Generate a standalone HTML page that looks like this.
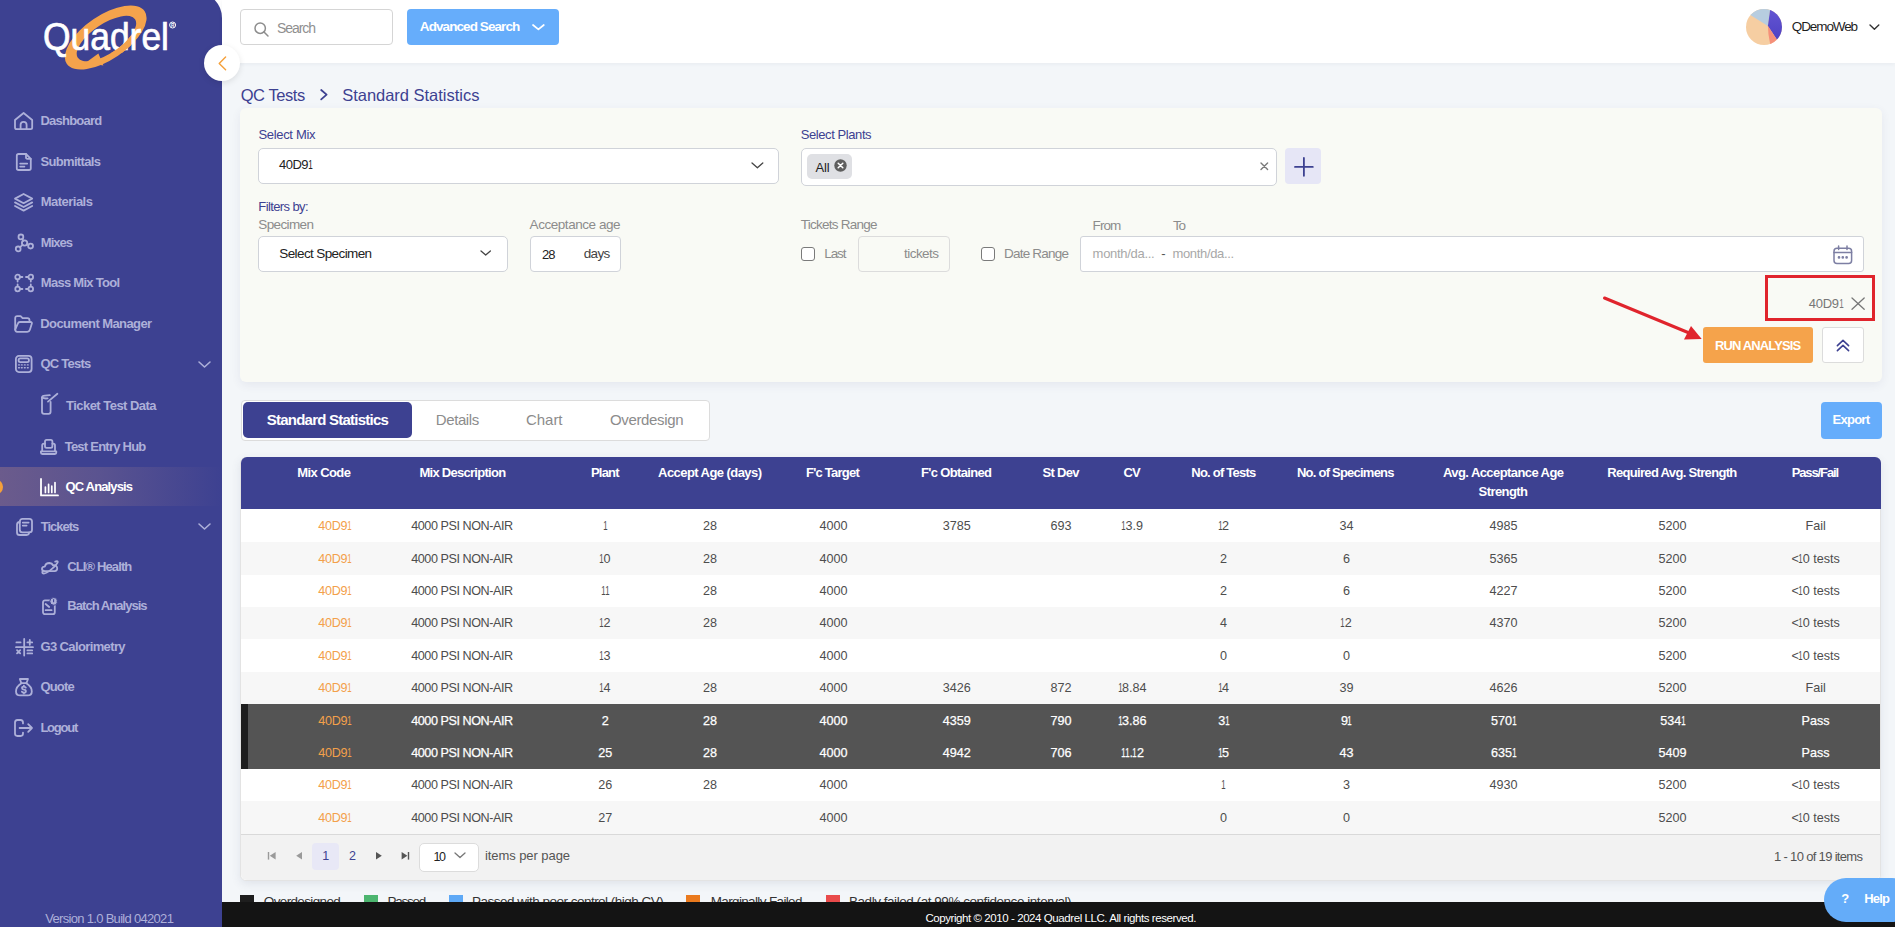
<!DOCTYPE html><html><head><meta charset="utf-8"><style>
html,body{margin:0;padding:0;}
body{width:1895px;height:927px;overflow:hidden;position:relative;background:#f3f6f9;font-family:"Liberation Sans",sans-serif;}
.t{position:absolute;white-space:nowrap;}
svg{overflow:visible;}
</style></head><body>
<div style="position:absolute;left:0;top:0;width:222px;height:40px;background:#fff;"></div>
<div style="position:absolute;left:0;top:-8px;width:222px;height:935px;background:#3d4191;border-top-right-radius:26px;"></div>
<div style="position:absolute;left:0;top:467px;width:222px;height:39px;background:linear-gradient(90deg,#6b5b8c 0%,#5a5390 45%,#3d4191 100%);"></div>
<div style="position:absolute;left:-10px;top:479.5px;width:12.5px;height:14px;border-radius:50%;background:#f5a03a;"></div>
<div class="t" style="left:40.40px;top:112.90px;font-size:13px;line-height:15.6px;color:#adb0d9;letter-spacing:-0.750px;font-weight:700;">Dashboard</div>
<div class="t" style="left:40.40px;top:154.00px;font-size:13px;line-height:15.6px;color:#adb0d9;letter-spacing:-0.651px;font-weight:700;">Submittals</div>
<div class="t" style="left:40.80px;top:193.70px;font-size:13px;line-height:15.6px;color:#adb0d9;letter-spacing:-0.533px;font-weight:700;">Materials</div>
<div class="t" style="left:40.80px;top:235.00px;font-size:13px;line-height:15.6px;color:#adb0d9;letter-spacing:-0.958px;font-weight:700;">Mixes</div>
<div class="t" style="left:40.80px;top:274.80px;font-size:13px;line-height:15.6px;color:#adb0d9;letter-spacing:-0.715px;font-weight:700;">Mass Mix Tool</div>
<div class="t" style="left:40.30px;top:315.90px;font-size:13px;line-height:15.6px;color:#adb0d9;letter-spacing:-0.589px;font-weight:700;">Document Manager</div>
<div class="t" style="left:40.40px;top:356.00px;font-size:13px;line-height:15.6px;color:#adb0d9;letter-spacing:-0.744px;font-weight:700;">QC Tests</div>
<div class="t" style="left:66.00px;top:397.70px;font-size:13px;line-height:15.6px;color:#adb0d9;letter-spacing:-0.527px;font-weight:700;">Ticket Test Data</div>
<div class="t" style="left:64.70px;top:438.80px;font-size:13px;line-height:15.6px;color:#adb0d9;letter-spacing:-0.761px;font-weight:700;">Test Entry Hub</div>
<div class="t" style="left:65.60px;top:478.70px;font-size:13px;line-height:15.6px;color:#ffffff;letter-spacing:-0.870px;font-weight:700;">QC Analysis</div>
<div class="t" style="left:40.80px;top:519.00px;font-size:13px;line-height:15.6px;color:#adb0d9;letter-spacing:-1.028px;font-weight:700;">Tickets</div>
<div class="t" style="left:67.30px;top:558.70px;font-size:13px;line-height:15.6px;color:#adb0d9;letter-spacing:-0.886px;font-weight:700;">CLI® Health</div>
<div class="t" style="left:67.30px;top:597.80px;font-size:13px;line-height:15.6px;color:#adb0d9;letter-spacing:-0.956px;font-weight:700;">Batch Analysis</div>
<div class="t" style="left:40.40px;top:639.20px;font-size:13px;line-height:15.6px;color:#adb0d9;letter-spacing:-0.616px;font-weight:700;">G3 Calorimetry</div>
<div class="t" style="left:40.40px;top:679.00px;font-size:13px;line-height:15.6px;color:#adb0d9;letter-spacing:-0.788px;font-weight:700;">Quote</div>
<div class="t" style="left:40.40px;top:720.10px;font-size:13px;line-height:15.6px;color:#adb0d9;letter-spacing:-1.227px;font-weight:700;">Logout</div>
<svg style="position:absolute;left:14.20px;top:111.90px;" width="19.20" height="18.10" viewBox="0 0 19.20 18.10" fill="none" stroke="#adb0d9" stroke-width="1.8" stroke-linecap="round" stroke-linejoin="round"><path d="M1 8 L9.6 1 L18.2 8 V15.6 Q18.2 17.2 16.6 17.2 H2.6 Q1 17.2 1 15.6 Z"/><path d="M6.6 17.2 V12.8 A3 3 0 0 1 12.6 12.8 V17.2"/></svg>
<svg style="position:absolute;left:16.00px;top:153.00px;" width="15.70" height="18.00" viewBox="0 0 15.70 18.00" fill="none" stroke="#adb0d9" stroke-width="1.8" stroke-linecap="round" stroke-linejoin="round"><path d="M2.6 1 H10 L14.8 5.8 V15.2 Q14.8 17 13 17 H2.6 Q0.8 17 0.8 15.2 V2.8 Q0.8 1 2.6 1 Z"/><path d="M10 1 V4.4 Q10 5.8 11.4 5.8 H14.8"/><path d="M4.2 10.6 H11.2 M4.2 13.6 H8.4"/></svg>
<svg style="position:absolute;left:14.20px;top:192.60px;" width="19.20" height="18.40" viewBox="0 0 19.20 18.40" fill="none" stroke="#adb0d9" stroke-width="1.8" stroke-linecap="round" stroke-linejoin="round"><path d="M9.6 1 L18.2 5.6 L9.6 10.2 L1 5.6 Z"/><path d="M1 9.4 L9.6 14 L18.2 9.4"/><path d="M1 13 L9.6 17.6 L18.2 13"/></svg>
<svg style="position:absolute;left:14.50px;top:234.00px;" width="18.70" height="18.20" viewBox="0 0 18.70 18.20" fill="none" stroke="#adb0d9" stroke-width="1.8" stroke-linecap="round" stroke-linejoin="round"><circle cx="5.9" cy="2.9" r="2.4"/><circle cx="9.6" cy="9" r="2.7"/><circle cx="15.6" cy="12.1" r="2.4"/><circle cx="3.2" cy="14.9" r="2.4"/><path d="M7.1 5 L8.3 6.7 M12 10.2 L13.4 11 M7.6 10.9 L5 13.2"/></svg>
<svg style="position:absolute;left:14.50px;top:274.00px;" width="18.70" height="18.20" viewBox="0 0 18.70 18.20" fill="none" stroke="#adb0d9" stroke-width="1.8" stroke-linecap="round" stroke-linejoin="round"><circle cx="2.6" cy="3" r="2.3"/><circle cx="15.8" cy="3" r="2.3"/><circle cx="2.6" cy="15" r="2.3"/><circle cx="15.8" cy="15" r="2.3"/><path d="M5.2 3 H7.4 M11 3 H13.2 M5.2 15 H7.4 M11 15 H13.2 M2.6 5.6 V7.6 M2.6 10.4 V12.4 M15.8 5.6 V7.6 M15.8 10.4 V12.4"/></svg>
<svg style="position:absolute;left:14.30px;top:315.00px;" width="19.10" height="18.00" viewBox="0 0 19.10 18.00" fill="none" stroke="#adb0d9" stroke-width="1.8" stroke-linecap="round" stroke-linejoin="round"><path d="M1.2 14.6 V3.2 Q1.2 1.1 3.3 1.1 H6.6 L8.6 3.1 H13.4 Q15.5 3.1 15.5 5.2 V7"/><path d="M1.2 14.6 L3.8 8.6 Q4.4 7 6 7 H16.4 Q18.4 7 17.8 8.8 L15.9 14.8 Q15.3 16.8 13.3 16.8 H3.2 Q1.2 16.8 1.2 14.6 Z"/></svg>
<svg style="position:absolute;left:15.30px;top:355.00px;" width="17.50" height="18.00" viewBox="0 0 17.50 18.00" fill="none" stroke="#adb0d9" stroke-width="1.8" stroke-linecap="round" stroke-linejoin="round"><rect x="0.9" y="0.9" width="15.7" height="16.2" rx="3"/><rect x="3.6" y="3.4" width="10.3" height="3.8" rx="1.6"/><path d="M3.6 9.9 H4.4 M6.4 9.9 H7.2 M9.4 9.9 H10.2 M12.4 9.9 H13.2 M3.6 12.7 H4.4 M6.4 12.7 H7.2 M9.4 12.7 H10.2 M12.4 12.7 H13.2" stroke-width="1.4"/></svg>
<svg style="position:absolute;left:41.00px;top:393.00px;" width="17.40" height="22.00" viewBox="0 0 17.40 22.00" fill="none" stroke="#adb0d9" stroke-width="1.8" stroke-linecap="round" stroke-linejoin="round"><path d="M1 4.6 Q1 2.8 4 2.6 L8.8 2.2" /><path d="M1 4.6 V18.8 Q1 20.8 3 20.8 H7.6 Q9.6 20.8 9.6 18.8 V8.8"/><path d="M1 4.6 Q3 5.8 6.6 5.4"/><path d="M7 8.6 L16.4 0.8"/></svg>
<svg style="position:absolute;left:40.00px;top:439.00px;" width="17.20" height="16.00" viewBox="0 0 17.20 16.00" fill="none" stroke="#adb0d9" stroke-width="1.8" stroke-linecap="round" stroke-linejoin="round"><rect x="5" y="0.9" width="7.4" height="8" rx="1.6"/><path d="M2.2 12.2 V6.4 Q2.2 4.6 4 4.6 H5 M12.4 4.6 H13.2 Q15 4.6 15 6.4 V12.2"/><path d="M0.9 12.4 H16.3 V13.6 Q16.3 15 14.9 15 H2.3 Q0.9 15 0.9 13.6 Z"/></svg>
<svg style="position:absolute;left:39.80px;top:477.80px;" width="19.00" height="18.40" viewBox="0 0 19.00 18.40" fill="none" stroke="#ffffff" stroke-width="1.8" stroke-linecap="round" stroke-linejoin="round"><path d="M1 1 V17.4 H18"/><path d="M5.4 9 V14.4 M8.6 6.4 V14.4 M11.8 8.2 V14.4 M15 4.6 V14.4" stroke-width="1.7"/></svg>
<svg style="position:absolute;left:15.60px;top:518.00px;" width="17.00" height="18.00" viewBox="0 0 17.00 18.00" fill="none" stroke="#adb0d9" stroke-width="1.8" stroke-linecap="round" stroke-linejoin="round"><rect x="3.8" y="0.9" width="12.2" height="13.4" rx="2.6"/><path d="M3.8 4 Q1 4.2 1 6.8 V14.4 Q1 17 3.6 17 H10.6 Q13 17 13.2 14.3"/><path d="M6.8 4.6 H12.6 M6.8 7.6 H10.6"/></svg>
<svg style="position:absolute;left:40.60px;top:559.80px;" width="18.00" height="14.40" viewBox="0 0 18.00 14.40" fill="none" stroke="#adb0d9" stroke-width="1.8" stroke-linecap="round" stroke-linejoin="round"><path d="M3.4 11.2 Q0.8 11 1 8.6 Q1.4 6.4 3.8 6.6 Q4.6 3 8.4 3 Q11.2 3.2 12 5.4 Q15 4.8 16 7.2 Q17 10.4 13.8 11.2 Z"/><path d="M1.6 13.2 Q4 14.6 10 9.6 Q16 4.6 16.8 2 Q16.6 0.6 14.2 1.6 M1.6 13.2 Q0.6 12 2.6 10.6"/></svg>
<svg style="position:absolute;left:41.80px;top:597.00px;" width="16.20" height="18.20" viewBox="0 0 16.20 18.20" fill="none" stroke="#adb0d9" stroke-width="1.8" stroke-linecap="round" stroke-linejoin="round"><rect x="1" y="3.4" width="11.8" height="13.8" rx="2"/><path d="M3.6 7 L7.2 10 M3.6 13.2 H9.6"/><circle cx="11.6" cy="4.4" r="3.8" fill="#adb0d9" stroke="#3d4191" stroke-width="1"/><path d="M11.6 2.6 V4.8" stroke="#3d4191" stroke-width="1.1"/></svg>
<svg style="position:absolute;left:14.60px;top:638.00px;" width="18.80" height="18.20" viewBox="0 0 18.80 18.20" fill="none" stroke="#adb0d9" stroke-width="1.8" stroke-linecap="round" stroke-linejoin="round"><path d="M9.2 1 V17.6 M1 9.2 H18 M1.4 4.4 H5.6 M12.4 4.4 H17.2 M14.8 2 V6.8 M2 12.2 L5.2 15.4 M5.2 12.2 L2 15.4 M12.4 12.4 H17.2 M12.4 15.4 H17.2"/></svg>
<svg style="position:absolute;left:15.20px;top:677.60px;" width="18.00" height="18.60" viewBox="0 0 18.00 18.60" fill="none" stroke="#adb0d9" stroke-width="1.8" stroke-linecap="round" stroke-linejoin="round"><path d="M6.4 5.2 L4.8 1 H13 L11.4 5.2"/><path d="M6.4 5.2 H11.4"/><path d="M6.4 5.2 Q1 8.6 1 13.4 Q1 17.4 5.2 17.4 H12.6 Q16.8 17.4 16.8 13.4 Q16.8 8.6 11.4 5.2"/><path d="M10.8 9.6 Q10.4 8.6 8.9 8.6 Q7 8.6 7 10.1 Q7 11.4 8.9 11.6 Q10.9 11.8 10.9 13.2 Q10.9 14.6 8.9 14.6 Q7.3 14.6 6.9 13.6 M8.9 7.6 V8.6 M8.9 14.6 V15.6"/></svg>
<svg style="position:absolute;left:14.40px;top:719.00px;" width="19.20" height="18.00" viewBox="0 0 19.20 18.00" fill="none" stroke="#adb0d9" stroke-width="1.8" stroke-linecap="round" stroke-linejoin="round"><path d="M9 4.4 V3.4 Q9 1 6.6 1 H3.4 Q1 1 1 3.4 V14.6 Q1 17 3.4 17 H6.6 Q9 17 9 14.6 V13.6"/><path d="M5.6 9 H18 M14.2 5.2 L18 9 L14.2 12.8"/></svg>
<svg style="position:absolute;left:0;top:0" width="222" height="80" viewBox="0 0 222 80"><g transform="translate(105.7 37.5) rotate(-34)"><path fill-rule="evenodd" fill="#f4a34c" d="M-47 0 A47 22 0 1 0 47 0 A47 22 0 1 0 -47 0 Z M-34.5 1.3 A34.5 14.6 0 1 0 34.5 1.3 A34.5 14.6 0 1 0 -34.5 1.3 Z"/></g><path d="M98.4 53.4 L103.4 65.6 L86 62.6 Z" fill="#f4a34c"/></svg>
<div class="t" style="left:43px;top:13.4px;font-size:39.5px;line-height:47.4px;color:#fff;transform:scaleX(0.8964);transform-origin:0 0;-webkit-text-stroke:0.7px #fff;">Quadrel</div>
<svg style="position:absolute;left:0;top:0" width="222" height="80" viewBox="0 0 222 80"><defs><clipPath id="lc"><path d="M111 24 H131 V53 H111 Z"/></clipPath></defs><g clip-path="url(#lc)"><g transform="translate(105.7 37.5) rotate(-34)"><path fill-rule="evenodd" fill="#f4a34c" d="M-47 0 A47 22 0 1 0 47 0 A47 22 0 1 0 -47 0 Z M-34.5 1.3 A34.5 14.6 0 1 0 34.5 1.3 A34.5 14.6 0 1 0 -34.5 1.3 Z"/></g></g><circle cx="172.6" cy="25" r="3" fill="none" stroke="#fff" stroke-width="1"/><text x="172.6" y="26.8" font-size="4.6" font-weight="700" fill="#fff" text-anchor="middle" font-family="Liberation Sans">R</text></svg>
<svg style="position:absolute;left:197.50px;top:360.50px;" width="13.00" height="7.20" viewBox="0 0 13.00 7.20" fill="none" stroke="#adb0d9" stroke-width="1.6" stroke-linecap="round" stroke-linejoin="round"><path d="M1 1 L6.5 6 L12 1"/></svg>
<svg style="position:absolute;left:197.50px;top:523.30px;" width="13.00" height="7.20" viewBox="0 0 13.00 7.20" fill="none" stroke="#adb0d9" stroke-width="1.6" stroke-linecap="round" stroke-linejoin="round"><path d="M1 1 L6.5 6 L12 1"/></svg>
<div class="t" style="left:45.30px;top:911.10px;font-size:13px;line-height:15.6px;color:#adb0d9;letter-spacing:-0.694px;">Version 1.0 Build 042021</div>
<div style="position:absolute;left:222px;top:0;width:1673px;height:63px;background:#fff;box-shadow:0 1px 4px rgba(40,50,90,0.06);"></div>
<div style="position:absolute;left:240px;top:9px;width:151px;height:34px;border:1px solid #d5d5d5;border-radius:4px;background:#fff;"></div>
<svg style="position:absolute;left:253.80px;top:21.80px;" width="15.20" height="14.40" viewBox="0 0 15.20 14.40" fill="none" stroke="#8d8d8d" stroke-width="1.5" stroke-linecap="round" stroke-linejoin="round"><circle cx="6.2" cy="6.2" r="5.2"/><path d="M10 10 L14 14"/></svg>
<div class="t" style="left:277.00px;top:20.45px;font-size:14px;line-height:16.8px;color:#8f8f8f;letter-spacing:-1.072px;">Search</div>
<div style="position:absolute;left:407px;top:9px;width:152px;height:35.5px;background:#66adfb;border-radius:4px;"></div>
<div class="t" style="left:419.80px;top:18.62px;font-size:13.5px;line-height:16.2px;color:#fff;letter-spacing:-0.914px;font-weight:700;">Advanced Search</div>
<svg style="position:absolute;left:532.20px;top:23.80px;" width="12.80" height="6.40" viewBox="0 0 12.80 6.40" fill="none" stroke="#fff" stroke-width="1.7" stroke-linecap="round" stroke-linejoin="round"><path d="M1 1 L6.4 5.4 L11.8 1"/></svg>
<svg style="position:absolute;left:1746px;top:9px" width="36" height="36" viewBox="0 0 36 36"><defs><clipPath id="cp"><circle cx="18" cy="18" r="18"/></clipPath><linearGradient id="pg" x1="0" y1="0" x2="0" y2="1"><stop offset="0" stop-color="#6c5fd9"/><stop offset="1" stop-color="#4537bd"/></linearGradient></defs><g clip-path="url(#cp)"><rect width="36" height="36" fill="#f6cea2"/><path d="M21.9 17 L-11.5 -3.8 L-11.5 -13.4 L26.1 -13.4 Z" fill="#b7cde0"/><path d="M21.9 17 L26.1 -13.4 L45 -13.4 L45 45 L38.5 42.2 Z" fill="url(#pg)"/><path d="M21.9 17 L38.5 42.2 L27 45 Q22 30 21.9 17 Z" fill="#f5907a"/></g></svg>
<div class="t" style="left:1791.80px;top:18.52px;font-size:13.5px;line-height:16.2px;color:#1f1f1f;letter-spacing:-1.104px;">QDemoWeb</div>
<svg style="position:absolute;left:1868.80px;top:23.60px;" width="10.80" height="6.60" viewBox="0 0 10.80 6.60" fill="none" stroke="#333" stroke-width="1.4" stroke-linecap="round" stroke-linejoin="round"><path d="M1 1 L5.4 5.2 L9.8 1"/></svg>
<div style="position:absolute;left:204px;top:45px;width:36px;height:36px;border-radius:50%;background:#fff;box-shadow:0 2px 6px rgba(0,0,0,0.10);"></div>
<svg style="position:absolute;left:217.50px;top:55.60px;" width="9.50" height="14.80" viewBox="0 0 9.50 14.80" fill="none" stroke="#f5a03a" stroke-width="1.4" stroke-linecap="round" stroke-linejoin="round"><path d="M7.6 1 L1.2 7.4 L7.6 13.8"/></svg>
<div class="t" style="left:240.70px;top:85.58px;font-size:16.5px;line-height:19.8px;color:#3d4191;letter-spacing:-0.435px;">QC Tests</div>
<svg style="position:absolute;left:319.60px;top:89.40px;" width="8.40" height="11.40" viewBox="0 0 8.40 11.40" fill="none" stroke="#3d4191" stroke-width="1.8" stroke-linecap="round" stroke-linejoin="round"><path d="M1.2 1 L6.6 5.7 L1.2 10.4"/></svg>
<div class="t" style="left:342.20px;top:85.58px;font-size:16.5px;line-height:19.8px;color:#3d4191;letter-spacing:-0.021px;">Standard Statistics</div>
<div style="position:absolute;left:240px;top:108px;width:1642px;height:274px;background:#f9faf5;border-radius:6px;box-shadow:0 3px 10px rgba(60,70,110,0.08);"></div>
<div class="t" style="left:258.50px;top:126.70px;font-size:13px;line-height:15.6px;color:#3d4191;letter-spacing:-0.329px;">Select Mix</div>
<div style="position:absolute;left:258px;top:148px;width:519px;height:34px;border:1px solid #d0d3d9;border-radius:5px;background:#fff;"></div>
<div class="t" style="left:279.10px;top:156.90px;font-size:13px;line-height:15.6px;color:#222;letter-spacing:-0.552px;">40D9<span style="display:inline-block;transform:scaleX(0.62);margin:0 -1.30px">1</span></div>
<svg style="position:absolute;left:751.00px;top:161.80px;" width="12.80" height="7.40" viewBox="0 0 12.80 7.40" fill="none" stroke="#444" stroke-width="1.3" stroke-linecap="round" stroke-linejoin="round"><path d="M1 1 L6.4 5.8 L11.8 1"/></svg>
<div class="t" style="left:800.70px;top:126.70px;font-size:13px;line-height:15.6px;color:#3d4191;letter-spacing:-0.415px;">Select Plants</div>
<div style="position:absolute;left:801px;top:148px;width:474px;height:35.5px;border:1px solid #d0d3d9;border-radius:5px;background:#fff;"></div>
<div style="position:absolute;left:807px;top:154px;width:45px;height:24.5px;background:#dfe0e4;border-radius:5px;"></div>
<div class="t" style="left:815.50px;top:160.10px;font-size:13px;line-height:15.6px;color:#222;letter-spacing:-0.174px;">All</div>
<svg style="position:absolute;left:834px;top:159.2px" width="13" height="13" viewBox="0 0 13 13"><circle cx="6.5" cy="6.5" r="6.2" fill="#5e5e5e"/><path d="M4.2 4.2 L8.8 8.8 M8.8 4.2 L4.2 8.8" stroke="#fff" stroke-width="1.5" stroke-linecap="round"/></svg>
<svg style="position:absolute;left:1260.40px;top:162.00px;" width="8.60" height="8.60" viewBox="0 0 8.60 8.60" fill="none" stroke="#7a7a7a" stroke-width="1.4" stroke-linecap="round" stroke-linejoin="round"><path d="M1 1 L7.6 7.6 M7.6 1 L1 7.6"/></svg>
<div style="position:absolute;left:1285px;top:148px;width:36px;height:36px;background:#e6e6f6;border-radius:4px;"></div>
<svg style="position:absolute;left:1293.60px;top:156.60px;" width="19.80" height="19.80" viewBox="0 0 19.80 19.80" fill="none" stroke="#3d4191" stroke-width="1.8" stroke-linecap="round" stroke-linejoin="round"><path d="M9.9 1 V18.8 M1 9.9 H18.8"/></svg>
<div class="t" style="left:258.30px;top:199.10px;font-size:13px;line-height:15.6px;color:#3d4191;letter-spacing:-0.604px;">Filters by:</div>
<div class="t" style="left:258.30px;top:216.52px;font-size:13.5px;line-height:16.2px;color:#8c8c8c;letter-spacing:-0.633px;">Specimen</div>
<div style="position:absolute;left:258px;top:236px;width:247.5px;height:34px;border:1px solid #d0d3d9;border-radius:5px;background:#fff;"></div>
<div class="t" style="left:279.30px;top:246.22px;font-size:13.5px;line-height:16.2px;color:#222;letter-spacing:-0.608px;">Select Specimen</div>
<svg style="position:absolute;left:480.40px;top:250.40px;" width="11.40" height="6.00" viewBox="0 0 11.40 6.00" fill="none" stroke="#444" stroke-width="1.3" stroke-linecap="round" stroke-linejoin="round"><path d="M1 1 L5.7 5 L10.4 1"/></svg>
<div class="t" style="left:529.60px;top:216.52px;font-size:13.5px;line-height:16.2px;color:#8c8c8c;letter-spacing:-0.448px;">Acceptance age</div>
<div style="position:absolute;left:529.6px;top:236px;width:89px;height:34px;border:1px solid #d0d3d9;border-radius:4px;background:#fff;"></div>
<div class="t" style="left:542.00px;top:246.70px;font-size:13px;line-height:15.6px;color:#222;letter-spacing:-0.860px;">28</div>
<div class="t" style="left:583.70px;top:246.22px;font-size:13.5px;line-height:16.2px;color:#444;letter-spacing:-0.639px;">days</div>
<div class="t" style="left:800.70px;top:216.52px;font-size:13.5px;line-height:16.2px;color:#8c8c8c;letter-spacing:-0.749px;">Tickets Range</div>
<div style="position:absolute;left:801.3px;top:246.8px;width:12px;height:12.6px;border:1.4px solid #7a7a7a;border-radius:3px;background:#fff;"></div>
<div class="t" style="left:824.30px;top:246.22px;font-size:13.5px;line-height:16.2px;color:#8c8c8c;letter-spacing:-1.106px;">Last</div>
<div style="position:absolute;left:858.3px;top:236px;width:89.5px;height:34px;border:1px solid #dcdcdc;border-radius:4px;background:#f9faf5;"></div>
<div class="t" style="left:904.10px;top:246.22px;font-size:13.5px;line-height:16.2px;color:#8c8c8c;letter-spacing:-0.560px;">tickets</div>
<div style="position:absolute;left:981px;top:246.8px;width:12px;height:12.6px;border:1.4px solid #7a7a7a;border-radius:3px;background:#fff;"></div>
<div class="t" style="left:1004.00px;top:246.22px;font-size:13.5px;line-height:16.2px;color:#8c8c8c;letter-spacing:-0.783px;">Date Range</div>
<div class="t" style="left:1092.60px;top:217.62px;font-size:13.5px;line-height:16.2px;color:#8c8c8c;letter-spacing:-0.932px;">From</div>
<div class="t" style="left:1173.00px;top:217.62px;font-size:13.5px;line-height:16.2px;color:#8c8c8c;letter-spacing:-1.258px;">To</div>
<div style="position:absolute;left:1080.2px;top:236px;width:781.5px;height:33.5px;border:1px solid #d0d3d9;border-radius:3px;background:#fff;"></div>
<div class="t" style="left:1092.60px;top:246.30px;font-size:13px;line-height:15.6px;color:#a8a8a8;letter-spacing:-0.294px;">month/da...</div>
<div class="t" style="left:1161.20px;top:246.30px;font-size:13px;line-height:15.6px;color:#555;letter-spacing:0.000px;">-</div>
<div class="t" style="left:1172.40px;top:246.30px;font-size:13px;line-height:15.6px;color:#a8a8a8;letter-spacing:-0.324px;">month/da...</div>
<svg style="position:absolute;left:1832.6px;top:245px" width="20" height="19.5" viewBox="0 0 20 19.5" fill="none" stroke="#7d7fa3" stroke-width="1.5" stroke-linecap="round"><rect x="1" y="3.2" width="17.6" height="15.2" rx="3"/><path d="M5.6 1 V4.6 M14 1 V4.6 M1 7.6 H18.6"/><circle cx="6" cy="12.4" r="0.6" fill="#7d7fa3"/><circle cx="9.8" cy="12.4" r="0.6" fill="#7d7fa3"/><circle cx="13.6" cy="12.4" r="0.6" fill="#7d7fa3"/></svg>
<div style="position:absolute;left:1765.3px;top:275.3px;width:103.5px;height:39.7px;border:3px solid #e0242c;"></div>
<div class="t" style="left:1808.70px;top:296.10px;font-size:13px;line-height:15.6px;color:#777;letter-spacing:-0.227px;">40D9<span style="display:inline-block;transform:scaleX(0.62);margin:0 -1.30px">1</span></div>
<svg style="position:absolute;left:1850.60px;top:297.00px;" width="14.20" height="13.20" viewBox="0 0 14.20 13.20" fill="none" stroke="#777" stroke-width="1.3" stroke-linecap="round" stroke-linejoin="round"><path d="M1 1 L13.2 12.2 M13.2 1 L1 12.2"/></svg>
<svg style="position:absolute;left:1600px;top:292px" width="110" height="52" viewBox="0 0 110 52"><path d="M4.5 6 L88 40.5" stroke="#e0242c" stroke-width="3" stroke-linecap="round"/><path d="M101.7 47 L84 47.5 L91 34 Z" fill="#e0242c"/></svg>
<div style="position:absolute;left:1703px;top:327px;width:110px;height:36px;background:#f5a34b;border-radius:3px;"></div>
<div class="t" style="left:1714.90px;top:338.00px;font-size:13px;line-height:15.6px;color:#fff;letter-spacing:-0.858px;font-weight:700;">RUN ANALYSIS</div>
<div style="position:absolute;left:1822.4px;top:327.4px;width:39.3px;height:34px;background:#fff;border:1px solid #dcdcdc;border-radius:3px;"></div>
<svg style="position:absolute;left:1836.40px;top:339.40px;" width="14.00" height="13.00" viewBox="0 0 14.00 13.00" fill="none" stroke="#3d4191" stroke-width="1.6" stroke-linecap="round" stroke-linejoin="round"><path d="M1.4 6.6 L7 1.4 L12.6 6.6 M1.4 11.6 L7 6.4 L12.6 11.6"/></svg>
<div style="position:absolute;left:240.5px;top:400.3px;width:467.5px;height:38.5px;background:#fff;border:1px solid #dcdcdc;border-radius:4px;"></div>
<div style="position:absolute;left:243px;top:402.2px;width:169px;height:35.7px;background:#3d4191;border-radius:5px;"></div>
<div class="t" style="left:266.70px;top:411.10px;font-size:15px;line-height:18.0px;color:#fff;letter-spacing:-0.760px;font-weight:700;">Standard Statistics</div>
<div class="t" style="left:435.80px;top:411.30px;font-size:15px;line-height:18.0px;color:#8c8c8c;letter-spacing:-0.408px;">Details</div>
<div class="t" style="left:526.00px;top:411.30px;font-size:15px;line-height:18.0px;color:#8c8c8c;letter-spacing:-0.045px;">Chart</div>
<div class="t" style="left:610.00px;top:411.30px;font-size:15px;line-height:18.0px;color:#8c8c8c;letter-spacing:-0.357px;">Overdesign</div>
<div style="position:absolute;left:1820.8px;top:402px;width:61px;height:37px;background:#66adfb;border-radius:4px;"></div>
<div class="t" style="left:1832.50px;top:411.50px;font-size:13px;line-height:15.6px;color:#fff;letter-spacing:-0.734px;font-weight:700;">Export</div>
<div style="position:absolute;left:240px;top:457px;width:1640.8px;height:423.5px;background:#fff;border:1px solid #e3e3e3;border-radius:6px;box-shadow:0 3px 10px rgba(60,70,110,0.10);box-sizing:border-box;"></div>
<div style="position:absolute;left:241px;top:457px;width:1640px;height:52px;background:#3d4191;border-radius:6px 6px 0 0;"></div>
<div class="t" style="left:297.20px;top:465.30px;font-size:13px;line-height:15.6px;color:#fff;letter-spacing:-0.583px;font-weight:700;">Mix Code</div>
<div class="t" style="left:419.40px;top:465.30px;font-size:13px;line-height:15.6px;color:#fff;letter-spacing:-0.721px;font-weight:700;">Mix Description</div>
<div class="t" style="left:591.00px;top:465.30px;font-size:13px;line-height:15.6px;color:#fff;letter-spacing:-0.821px;font-weight:700;">Plant</div>
<div class="t" style="left:658.10px;top:465.30px;font-size:13px;line-height:15.6px;color:#fff;letter-spacing:-0.565px;font-weight:700;">Accept Age (days)</div>
<div class="t" style="left:806.00px;top:465.30px;font-size:13px;line-height:15.6px;color:#fff;letter-spacing:-0.760px;font-weight:700;">F'c Target</div>
<div class="t" style="left:921.00px;top:465.30px;font-size:13px;line-height:15.6px;color:#fff;letter-spacing:-0.656px;font-weight:700;">F'c Obtained</div>
<div class="t" style="left:1042.50px;top:465.30px;font-size:13px;line-height:15.6px;color:#fff;letter-spacing:-0.672px;font-weight:700;">St Dev</div>
<div class="t" style="left:1123.60px;top:465.30px;font-size:13px;line-height:15.6px;color:#fff;letter-spacing:-0.860px;font-weight:700;">CV</div>
<div class="t" style="left:1191.30px;top:465.30px;font-size:13px;line-height:15.6px;color:#fff;letter-spacing:-0.776px;font-weight:700;">No. of Tests</div>
<div class="t" style="left:1297.00px;top:465.30px;font-size:13px;line-height:15.6px;color:#fff;letter-spacing:-0.772px;font-weight:700;">No. of Specimens</div>
<div class="t" style="left:1443.00px;top:465.30px;font-size:13px;line-height:15.6px;color:#fff;letter-spacing:-0.583px;font-weight:700;">Avg. Acceptance Age</div>
<div class="t" style="left:1607.20px;top:465.30px;font-size:13px;line-height:15.6px;color:#fff;letter-spacing:-0.672px;font-weight:700;">Required Avg. Strength</div>
<div class="t" style="left:1791.70px;top:465.30px;font-size:13px;line-height:15.6px;color:#fff;letter-spacing:-1.109px;font-weight:700;">Pass/Fail</div>
<div class="t" style="left:1478.60px;top:484.20px;font-size:13px;line-height:15.6px;color:#fff;letter-spacing:-0.578px;font-weight:700;">Strength</div>
<div style="position:absolute;left:241px;top:509px;width:1638.8px;height:33px;background:#ffffff;"></div>
<div class="t" style="left:318.20px;top:519.27px;font-size:12.6px;line-height:15.12px;color:#f3a04a;letter-spacing:-0.283px;">40D9<span style="display:inline-block;transform:scaleX(0.62);margin:0 -1.30px">1</span></div>
<div class="t" style="left:411.20px;top:519.27px;font-size:12.6px;line-height:15.12px;color:#4d4d4d;letter-spacing:-0.436px;">4000 PSI NON-AIR</div>
<div class="t" style="left:603.30px;top:519.27px;font-size:12.6px;line-height:15.12px;color:#4d4d4d;letter-spacing:0.000px;"><span style="display:inline-block;transform:scaleX(0.62);margin:0 -1.60px">1</span></div>
<div class="t" style="left:702.99px;top:519.27px;font-size:12.6px;line-height:15.12px;color:#4d4d4d;letter-spacing:0.000px;">28</div>
<div class="t" style="left:819.38px;top:519.27px;font-size:12.6px;line-height:15.12px;color:#4d4d4d;letter-spacing:-0.000px;">4000</div>
<div class="t" style="left:942.68px;top:519.27px;font-size:12.6px;line-height:15.12px;color:#4d4d4d;letter-spacing:-0.000px;">3785</div>
<div class="t" style="left:1050.39px;top:519.27px;font-size:12.6px;line-height:15.12px;color:#4d4d4d;letter-spacing:0.000px;">693</div>
<div class="t" style="left:1121.74px;top:519.27px;font-size:12.6px;line-height:15.12px;color:#4d4d4d;letter-spacing:0.000px;"><span style="display:inline-block;transform:scaleX(0.62);margin:0 -1.60px">1</span>3.9</div>
<div class="t" style="left:1218.19px;top:519.27px;font-size:12.6px;line-height:15.12px;color:#4d4d4d;letter-spacing:-0.000px;"><span style="display:inline-block;transform:scaleX(0.62);margin:0 -1.60px">1</span>2</div>
<div class="t" style="left:1339.39px;top:519.27px;font-size:12.6px;line-height:15.12px;color:#4d4d4d;letter-spacing:0.000px;">34</div>
<div class="t" style="left:1489.48px;top:519.27px;font-size:12.6px;line-height:15.12px;color:#4d4d4d;letter-spacing:0.000px;">4985</div>
<div class="t" style="left:1658.58px;top:519.27px;font-size:12.6px;line-height:15.12px;color:#4d4d4d;letter-spacing:0.000px;">5200</div>
<div class="t" style="left:1805.45px;top:519.27px;font-size:12.6px;line-height:15.12px;color:#4d4d4d;letter-spacing:-0.000px;">Fail</div>
<div style="position:absolute;left:241px;top:542px;width:1638.8px;height:33px;background:#f7f7f7;"></div>
<div class="t" style="left:318.20px;top:551.67px;font-size:12.6px;line-height:15.12px;color:#f3a04a;letter-spacing:-0.283px;">40D9<span style="display:inline-block;transform:scaleX(0.62);margin:0 -1.30px">1</span></div>
<div class="t" style="left:411.20px;top:551.67px;font-size:12.6px;line-height:15.12px;color:#4d4d4d;letter-spacing:-0.436px;">4000 PSI NON-AIR</div>
<div class="t" style="left:599.79px;top:551.67px;font-size:12.6px;line-height:15.12px;color:#4d4d4d;letter-spacing:0.000px;"><span style="display:inline-block;transform:scaleX(0.62);margin:0 -1.60px">1</span>0</div>
<div class="t" style="left:702.99px;top:551.67px;font-size:12.6px;line-height:15.12px;color:#4d4d4d;letter-spacing:0.000px;">28</div>
<div class="t" style="left:819.38px;top:551.67px;font-size:12.6px;line-height:15.12px;color:#4d4d4d;letter-spacing:-0.000px;">4000</div>
<div class="t" style="left:1220.10px;top:551.67px;font-size:12.6px;line-height:15.12px;color:#4d4d4d;letter-spacing:0.000px;">2</div>
<div class="t" style="left:1342.90px;top:551.67px;font-size:12.6px;line-height:15.12px;color:#4d4d4d;letter-spacing:0.000px;">6</div>
<div class="t" style="left:1489.48px;top:551.67px;font-size:12.6px;line-height:15.12px;color:#4d4d4d;letter-spacing:0.000px;">5365</div>
<div class="t" style="left:1658.58px;top:551.67px;font-size:12.6px;line-height:15.12px;color:#4d4d4d;letter-spacing:0.000px;">5200</div>
<div class="t" style="left:1791.46px;top:551.67px;font-size:12.6px;line-height:15.12px;color:#4d4d4d;letter-spacing:0.000px;">&lt;<span style="display:inline-block;transform:scaleX(0.62);margin:0 -1.60px">1</span>0 tests</div>
<div style="position:absolute;left:241px;top:575px;width:1638.8px;height:32px;background:#ffffff;"></div>
<div class="t" style="left:318.20px;top:584.07px;font-size:12.6px;line-height:15.12px;color:#f3a04a;letter-spacing:-0.283px;">40D9<span style="display:inline-block;transform:scaleX(0.62);margin:0 -1.30px">1</span></div>
<div class="t" style="left:411.20px;top:584.07px;font-size:12.6px;line-height:15.12px;color:#4d4d4d;letter-spacing:-0.436px;">4000 PSI NON-AIR</div>
<div class="t" style="left:601.86px;top:584.07px;font-size:12.6px;line-height:15.12px;color:#4d4d4d;letter-spacing:-0.000px;"><span style="display:inline-block;transform:scaleX(0.62);margin:0 -1.60px">1</span><span style="display:inline-block;transform:scaleX(0.62);margin:0 -1.60px">1</span></div>
<div class="t" style="left:702.99px;top:584.07px;font-size:12.6px;line-height:15.12px;color:#4d4d4d;letter-spacing:0.000px;">28</div>
<div class="t" style="left:819.38px;top:584.07px;font-size:12.6px;line-height:15.12px;color:#4d4d4d;letter-spacing:-0.000px;">4000</div>
<div class="t" style="left:1220.10px;top:584.07px;font-size:12.6px;line-height:15.12px;color:#4d4d4d;letter-spacing:0.000px;">2</div>
<div class="t" style="left:1342.90px;top:584.07px;font-size:12.6px;line-height:15.12px;color:#4d4d4d;letter-spacing:0.000px;">6</div>
<div class="t" style="left:1489.48px;top:584.07px;font-size:12.6px;line-height:15.12px;color:#4d4d4d;letter-spacing:0.000px;">4227</div>
<div class="t" style="left:1658.58px;top:584.07px;font-size:12.6px;line-height:15.12px;color:#4d4d4d;letter-spacing:0.000px;">5200</div>
<div class="t" style="left:1791.46px;top:584.07px;font-size:12.6px;line-height:15.12px;color:#4d4d4d;letter-spacing:0.000px;">&lt;<span style="display:inline-block;transform:scaleX(0.62);margin:0 -1.60px">1</span>0 tests</div>
<div style="position:absolute;left:241px;top:607px;width:1638.8px;height:32px;background:#f7f7f7;"></div>
<div class="t" style="left:318.20px;top:616.47px;font-size:12.6px;line-height:15.12px;color:#f3a04a;letter-spacing:-0.283px;">40D9<span style="display:inline-block;transform:scaleX(0.62);margin:0 -1.30px">1</span></div>
<div class="t" style="left:411.20px;top:616.47px;font-size:12.6px;line-height:15.12px;color:#4d4d4d;letter-spacing:-0.436px;">4000 PSI NON-AIR</div>
<div class="t" style="left:599.79px;top:616.47px;font-size:12.6px;line-height:15.12px;color:#4d4d4d;letter-spacing:0.000px;"><span style="display:inline-block;transform:scaleX(0.62);margin:0 -1.60px">1</span>2</div>
<div class="t" style="left:702.99px;top:616.47px;font-size:12.6px;line-height:15.12px;color:#4d4d4d;letter-spacing:0.000px;">28</div>
<div class="t" style="left:819.38px;top:616.47px;font-size:12.6px;line-height:15.12px;color:#4d4d4d;letter-spacing:-0.000px;">4000</div>
<div class="t" style="left:1220.10px;top:616.47px;font-size:12.6px;line-height:15.12px;color:#4d4d4d;letter-spacing:0.000px;">4</div>
<div class="t" style="left:1340.99px;top:616.47px;font-size:12.6px;line-height:15.12px;color:#4d4d4d;letter-spacing:-0.000px;"><span style="display:inline-block;transform:scaleX(0.62);margin:0 -1.60px">1</span>2</div>
<div class="t" style="left:1489.48px;top:616.47px;font-size:12.6px;line-height:15.12px;color:#4d4d4d;letter-spacing:0.000px;">4370</div>
<div class="t" style="left:1658.58px;top:616.47px;font-size:12.6px;line-height:15.12px;color:#4d4d4d;letter-spacing:0.000px;">5200</div>
<div class="t" style="left:1791.46px;top:616.47px;font-size:12.6px;line-height:15.12px;color:#4d4d4d;letter-spacing:0.000px;">&lt;<span style="display:inline-block;transform:scaleX(0.62);margin:0 -1.60px">1</span>0 tests</div>
<div style="position:absolute;left:241px;top:639px;width:1638.8px;height:33px;background:#ffffff;"></div>
<div class="t" style="left:318.20px;top:648.87px;font-size:12.6px;line-height:15.12px;color:#f3a04a;letter-spacing:-0.283px;">40D9<span style="display:inline-block;transform:scaleX(0.62);margin:0 -1.30px">1</span></div>
<div class="t" style="left:411.20px;top:648.87px;font-size:12.6px;line-height:15.12px;color:#4d4d4d;letter-spacing:-0.436px;">4000 PSI NON-AIR</div>
<div class="t" style="left:599.79px;top:648.87px;font-size:12.6px;line-height:15.12px;color:#4d4d4d;letter-spacing:0.000px;"><span style="display:inline-block;transform:scaleX(0.62);margin:0 -1.60px">1</span>3</div>
<div class="t" style="left:819.38px;top:648.87px;font-size:12.6px;line-height:15.12px;color:#4d4d4d;letter-spacing:-0.000px;">4000</div>
<div class="t" style="left:1220.10px;top:648.87px;font-size:12.6px;line-height:15.12px;color:#4d4d4d;letter-spacing:0.000px;">0</div>
<div class="t" style="left:1342.90px;top:648.87px;font-size:12.6px;line-height:15.12px;color:#4d4d4d;letter-spacing:0.000px;">0</div>
<div class="t" style="left:1658.58px;top:648.87px;font-size:12.6px;line-height:15.12px;color:#4d4d4d;letter-spacing:0.000px;">5200</div>
<div class="t" style="left:1791.46px;top:648.87px;font-size:12.6px;line-height:15.12px;color:#4d4d4d;letter-spacing:0.000px;">&lt;<span style="display:inline-block;transform:scaleX(0.62);margin:0 -1.60px">1</span>0 tests</div>
<div style="position:absolute;left:241px;top:672px;width:1638.8px;height:32px;background:#f7f7f7;"></div>
<div class="t" style="left:318.20px;top:681.27px;font-size:12.6px;line-height:15.12px;color:#f3a04a;letter-spacing:-0.283px;">40D9<span style="display:inline-block;transform:scaleX(0.62);margin:0 -1.30px">1</span></div>
<div class="t" style="left:411.20px;top:681.27px;font-size:12.6px;line-height:15.12px;color:#4d4d4d;letter-spacing:-0.436px;">4000 PSI NON-AIR</div>
<div class="t" style="left:599.79px;top:681.27px;font-size:12.6px;line-height:15.12px;color:#4d4d4d;letter-spacing:0.000px;"><span style="display:inline-block;transform:scaleX(0.62);margin:0 -1.60px">1</span>4</div>
<div class="t" style="left:702.99px;top:681.27px;font-size:12.6px;line-height:15.12px;color:#4d4d4d;letter-spacing:0.000px;">28</div>
<div class="t" style="left:819.38px;top:681.27px;font-size:12.6px;line-height:15.12px;color:#4d4d4d;letter-spacing:-0.000px;">4000</div>
<div class="t" style="left:942.68px;top:681.27px;font-size:12.6px;line-height:15.12px;color:#4d4d4d;letter-spacing:-0.000px;">3426</div>
<div class="t" style="left:1050.39px;top:681.27px;font-size:12.6px;line-height:15.12px;color:#4d4d4d;letter-spacing:0.000px;">872</div>
<div class="t" style="left:1118.23px;top:681.27px;font-size:12.6px;line-height:15.12px;color:#4d4d4d;letter-spacing:-0.000px;"><span style="display:inline-block;transform:scaleX(0.62);margin:0 -1.60px">1</span>8.84</div>
<div class="t" style="left:1218.19px;top:681.27px;font-size:12.6px;line-height:15.12px;color:#4d4d4d;letter-spacing:-0.000px;"><span style="display:inline-block;transform:scaleX(0.62);margin:0 -1.60px">1</span>4</div>
<div class="t" style="left:1339.39px;top:681.27px;font-size:12.6px;line-height:15.12px;color:#4d4d4d;letter-spacing:0.000px;">39</div>
<div class="t" style="left:1489.48px;top:681.27px;font-size:12.6px;line-height:15.12px;color:#4d4d4d;letter-spacing:0.000px;">4626</div>
<div class="t" style="left:1658.58px;top:681.27px;font-size:12.6px;line-height:15.12px;color:#4d4d4d;letter-spacing:0.000px;">5200</div>
<div class="t" style="left:1805.45px;top:681.27px;font-size:12.6px;line-height:15.12px;color:#4d4d4d;letter-spacing:-0.000px;">Fail</div>
<div style="position:absolute;left:241px;top:704px;width:1638.8px;height:32px;background:#545454;"></div>
<div style="position:absolute;left:241px;top:704px;width:7px;height:32px;background:#1e1e1e;"></div>
<div class="t" style="left:318.20px;top:713.67px;font-size:12.6px;line-height:15.12px;color:#f3a04a;letter-spacing:-0.283px;">40D9<span style="display:inline-block;transform:scaleX(0.62);margin:0 -1.30px">1</span></div>
<div class="t" style="left:411.20px;top:713.67px;font-size:12.6px;line-height:15.12px;color:#ffffff;letter-spacing:-0.436px;-webkit-text-stroke:0.25px #fff;">4000 PSI NON-AIR</div>
<div class="t" style="left:601.70px;top:713.67px;font-size:12.6px;line-height:15.12px;color:#ffffff;letter-spacing:0.000px;-webkit-text-stroke:0.25px #fff;">2</div>
<div class="t" style="left:702.99px;top:713.67px;font-size:12.6px;line-height:15.12px;color:#ffffff;letter-spacing:0.000px;-webkit-text-stroke:0.25px #fff;">28</div>
<div class="t" style="left:819.38px;top:713.67px;font-size:12.6px;line-height:15.12px;color:#ffffff;letter-spacing:-0.000px;-webkit-text-stroke:0.25px #fff;">4000</div>
<div class="t" style="left:942.68px;top:713.67px;font-size:12.6px;line-height:15.12px;color:#ffffff;letter-spacing:-0.000px;-webkit-text-stroke:0.25px #fff;">4359</div>
<div class="t" style="left:1050.39px;top:713.67px;font-size:12.6px;line-height:15.12px;color:#ffffff;letter-spacing:0.000px;-webkit-text-stroke:0.25px #fff;">790</div>
<div class="t" style="left:1118.23px;top:713.67px;font-size:12.6px;line-height:15.12px;color:#ffffff;letter-spacing:-0.000px;-webkit-text-stroke:0.25px #fff;"><span style="display:inline-block;transform:scaleX(0.62);margin:0 -1.60px">1</span>3.86</div>
<div class="t" style="left:1218.19px;top:713.67px;font-size:12.6px;line-height:15.12px;color:#ffffff;letter-spacing:-0.000px;-webkit-text-stroke:0.25px #fff;">3<span style="display:inline-block;transform:scaleX(0.62);margin:0 -1.60px">1</span></div>
<div class="t" style="left:1340.99px;top:713.67px;font-size:12.6px;line-height:15.12px;color:#ffffff;letter-spacing:-0.000px;-webkit-text-stroke:0.25px #fff;">9<span style="display:inline-block;transform:scaleX(0.62);margin:0 -1.60px">1</span></div>
<div class="t" style="left:1491.08px;top:713.67px;font-size:12.6px;line-height:15.12px;color:#ffffff;letter-spacing:-0.000px;-webkit-text-stroke:0.25px #fff;">570<span style="display:inline-block;transform:scaleX(0.62);margin:0 -1.60px">1</span></div>
<div class="t" style="left:1660.18px;top:713.67px;font-size:12.6px;line-height:15.12px;color:#ffffff;letter-spacing:-0.000px;-webkit-text-stroke:0.25px #fff;">534<span style="display:inline-block;transform:scaleX(0.62);margin:0 -1.60px">1</span></div>
<div class="t" style="left:1801.59px;top:713.67px;font-size:12.6px;line-height:15.12px;color:#ffffff;letter-spacing:-0.000px;-webkit-text-stroke:0.25px #fff;">Pass</div>
<div style="position:absolute;left:241px;top:736px;width:1638.8px;height:33px;background:#545454;"></div>
<div style="position:absolute;left:241px;top:736px;width:7px;height:33px;background:#1e1e1e;"></div>
<div class="t" style="left:318.20px;top:746.07px;font-size:12.6px;line-height:15.12px;color:#f3a04a;letter-spacing:-0.283px;">40D9<span style="display:inline-block;transform:scaleX(0.62);margin:0 -1.30px">1</span></div>
<div class="t" style="left:411.20px;top:746.07px;font-size:12.6px;line-height:15.12px;color:#ffffff;letter-spacing:-0.436px;-webkit-text-stroke:0.25px #fff;">4000 PSI NON-AIR</div>
<div class="t" style="left:598.19px;top:746.07px;font-size:12.6px;line-height:15.12px;color:#ffffff;letter-spacing:0.000px;-webkit-text-stroke:0.25px #fff;">25</div>
<div class="t" style="left:702.99px;top:746.07px;font-size:12.6px;line-height:15.12px;color:#ffffff;letter-spacing:0.000px;-webkit-text-stroke:0.25px #fff;">28</div>
<div class="t" style="left:819.38px;top:746.07px;font-size:12.6px;line-height:15.12px;color:#ffffff;letter-spacing:-0.000px;-webkit-text-stroke:0.25px #fff;">4000</div>
<div class="t" style="left:942.68px;top:746.07px;font-size:12.6px;line-height:15.12px;color:#ffffff;letter-spacing:-0.000px;-webkit-text-stroke:0.25px #fff;">4942</div>
<div class="t" style="left:1050.39px;top:746.07px;font-size:12.6px;line-height:15.12px;color:#ffffff;letter-spacing:0.000px;-webkit-text-stroke:0.25px #fff;">706</div>
<div class="t" style="left:1121.90px;top:746.07px;font-size:12.6px;line-height:15.12px;color:#ffffff;letter-spacing:0.000px;-webkit-text-stroke:0.25px #fff;"><span style="display:inline-block;transform:scaleX(0.62);margin:0 -1.60px">1</span><span style="display:inline-block;transform:scaleX(0.62);margin:0 -1.60px">1</span>.<span style="display:inline-block;transform:scaleX(0.62);margin:0 -1.60px">1</span>2</div>
<div class="t" style="left:1218.19px;top:746.07px;font-size:12.6px;line-height:15.12px;color:#ffffff;letter-spacing:-0.000px;-webkit-text-stroke:0.25px #fff;"><span style="display:inline-block;transform:scaleX(0.62);margin:0 -1.60px">1</span>5</div>
<div class="t" style="left:1339.39px;top:746.07px;font-size:12.6px;line-height:15.12px;color:#ffffff;letter-spacing:0.000px;-webkit-text-stroke:0.25px #fff;">43</div>
<div class="t" style="left:1491.08px;top:746.07px;font-size:12.6px;line-height:15.12px;color:#ffffff;letter-spacing:-0.000px;-webkit-text-stroke:0.25px #fff;">635<span style="display:inline-block;transform:scaleX(0.62);margin:0 -1.60px">1</span></div>
<div class="t" style="left:1658.58px;top:746.07px;font-size:12.6px;line-height:15.12px;color:#ffffff;letter-spacing:0.000px;-webkit-text-stroke:0.25px #fff;">5409</div>
<div class="t" style="left:1801.59px;top:746.07px;font-size:12.6px;line-height:15.12px;color:#ffffff;letter-spacing:-0.000px;-webkit-text-stroke:0.25px #fff;">Pass</div>
<div style="position:absolute;left:241px;top:769px;width:1638.8px;height:32px;background:#ffffff;"></div>
<div class="t" style="left:318.20px;top:778.47px;font-size:12.6px;line-height:15.12px;color:#f3a04a;letter-spacing:-0.283px;">40D9<span style="display:inline-block;transform:scaleX(0.62);margin:0 -1.30px">1</span></div>
<div class="t" style="left:411.20px;top:778.47px;font-size:12.6px;line-height:15.12px;color:#4d4d4d;letter-spacing:-0.436px;">4000 PSI NON-AIR</div>
<div class="t" style="left:598.19px;top:778.47px;font-size:12.6px;line-height:15.12px;color:#4d4d4d;letter-spacing:0.000px;">26</div>
<div class="t" style="left:702.99px;top:778.47px;font-size:12.6px;line-height:15.12px;color:#4d4d4d;letter-spacing:0.000px;">28</div>
<div class="t" style="left:819.38px;top:778.47px;font-size:12.6px;line-height:15.12px;color:#4d4d4d;letter-spacing:-0.000px;">4000</div>
<div class="t" style="left:1221.70px;top:778.47px;font-size:12.6px;line-height:15.12px;color:#4d4d4d;letter-spacing:0.000px;"><span style="display:inline-block;transform:scaleX(0.62);margin:0 -1.60px">1</span></div>
<div class="t" style="left:1342.90px;top:778.47px;font-size:12.6px;line-height:15.12px;color:#4d4d4d;letter-spacing:0.000px;">3</div>
<div class="t" style="left:1489.48px;top:778.47px;font-size:12.6px;line-height:15.12px;color:#4d4d4d;letter-spacing:0.000px;">4930</div>
<div class="t" style="left:1658.58px;top:778.47px;font-size:12.6px;line-height:15.12px;color:#4d4d4d;letter-spacing:0.000px;">5200</div>
<div class="t" style="left:1791.46px;top:778.47px;font-size:12.6px;line-height:15.12px;color:#4d4d4d;letter-spacing:0.000px;">&lt;<span style="display:inline-block;transform:scaleX(0.62);margin:0 -1.60px">1</span>0 tests</div>
<div style="position:absolute;left:241px;top:801px;width:1638.8px;height:33px;background:#f7f7f7;"></div>
<div class="t" style="left:318.20px;top:810.87px;font-size:12.6px;line-height:15.12px;color:#f3a04a;letter-spacing:-0.283px;">40D9<span style="display:inline-block;transform:scaleX(0.62);margin:0 -1.30px">1</span></div>
<div class="t" style="left:411.20px;top:810.87px;font-size:12.6px;line-height:15.12px;color:#4d4d4d;letter-spacing:-0.436px;">4000 PSI NON-AIR</div>
<div class="t" style="left:598.19px;top:810.87px;font-size:12.6px;line-height:15.12px;color:#4d4d4d;letter-spacing:0.000px;">27</div>
<div class="t" style="left:819.38px;top:810.87px;font-size:12.6px;line-height:15.12px;color:#4d4d4d;letter-spacing:-0.000px;">4000</div>
<div class="t" style="left:1220.10px;top:810.87px;font-size:12.6px;line-height:15.12px;color:#4d4d4d;letter-spacing:0.000px;">0</div>
<div class="t" style="left:1342.90px;top:810.87px;font-size:12.6px;line-height:15.12px;color:#4d4d4d;letter-spacing:0.000px;">0</div>
<div class="t" style="left:1658.58px;top:810.87px;font-size:12.6px;line-height:15.12px;color:#4d4d4d;letter-spacing:0.000px;">5200</div>
<div class="t" style="left:1791.46px;top:810.87px;font-size:12.6px;line-height:15.12px;color:#4d4d4d;letter-spacing:0.000px;">&lt;<span style="display:inline-block;transform:scaleX(0.62);margin:0 -1.60px">1</span>0 tests</div>
<div style="position:absolute;left:241px;top:834px;width:1638.8px;height:46px;background:#f2f2f2;border-top:1px solid #d9d9d9;border-radius:0 0 6px 6px;box-sizing:border-box;"></div>
<svg style="position:absolute;left:266px;top:850px" width="150" height="12" viewBox="0 0 150 12"><g fill="#9a9a9a"><rect x="1.8" y="2" width="1.4" height="7.6"/><path d="M9.6 2 V9.6 L3.8 5.8 Z"/><path d="M36 2 V9.6 L30.2 5.8 Z"/></g><g fill="#555"><path d="M110 2 V9.6 L115.8 5.8 Z"/><path d="M135.6 2 V9.6 L141.4 5.8 Z"/><rect x="141.8" y="2" width="1.4" height="7.6"/></g></svg>
<div style="position:absolute;left:312px;top:843px;width:26.7px;height:26.8px;background:#e8e8f6;border-radius:4px;"></div>
<div class="t" style="left:322.20px;top:848.97px;font-size:12.5px;line-height:15.0px;color:#3d4191;letter-spacing:0.000px;">1</div>
<div class="t" style="left:349.00px;top:848.97px;font-size:12.5px;line-height:15.0px;color:#3d4191;letter-spacing:0.000px;">2</div>
<div style="position:absolute;left:419.3px;top:843.3px;width:57.3px;height:27px;background:#fff;border:1px solid #dcdcdc;border-radius:5px;"></div>
<div class="t" style="left:433.60px;top:850.17px;font-size:12.5px;line-height:15.0px;color:#222;letter-spacing:-1.504px;">10</div>
<svg style="position:absolute;left:454.40px;top:852.40px;" width="12.00" height="7.00" viewBox="0 0 12.00 7.00" fill="none" stroke="#777" stroke-width="1.3" stroke-linecap="round" stroke-linejoin="round"><path d="M1 1 L6 5.6 L11 1"/></svg>
<div class="t" style="left:484.90px;top:847.60px;font-size:13px;line-height:15.6px;color:#555;letter-spacing:-0.061px;">items per page</div>
<div class="t" style="left:1774.00px;top:848.80px;font-size:13px;line-height:15.6px;color:#555;letter-spacing:-0.673px;">1 - 10 of 19 items</div>
<div style="position:absolute;left:240px;top:895px;width:14px;height:14px;background:#1e1e1e;"></div>
<div class="t" style="left:263.80px;top:893.82px;font-size:13.5px;line-height:16.2px;color:#333;letter-spacing:-0.641px;">Overdesigned</div>
<div style="position:absolute;left:364px;top:895px;width:14px;height:14px;background:#4cb56f;"></div>
<div class="t" style="left:387.40px;top:893.82px;font-size:13.5px;line-height:16.2px;color:#333;letter-spacing:-1.226px;">Passed</div>
<div style="position:absolute;left:448.8px;top:895px;width:14px;height:14px;background:#5ea9f6;"></div>
<div class="t" style="left:472.00px;top:893.82px;font-size:13.5px;line-height:16.2px;color:#333;letter-spacing:-0.509px;">Passed with poor control (high CV)</div>
<div style="position:absolute;left:686px;top:895px;width:14px;height:14px;background:#ea7a1e;"></div>
<div class="t" style="left:710.70px;top:893.82px;font-size:13.5px;line-height:16.2px;color:#333;letter-spacing:-0.640px;">Marginally Failed</div>
<div style="position:absolute;left:826px;top:895px;width:14px;height:14px;background:#e94b4b;"></div>
<div class="t" style="left:849.00px;top:893.82px;font-size:13.5px;line-height:16.2px;color:#333;letter-spacing:-0.457px;">Badly failed (at 99% confidence interval)</div>
<div style="position:absolute;left:222px;top:902px;width:1673px;height:25px;background:#141414;"></div>
<div class="t" style="left:925.40px;top:911.52px;font-size:11.5px;line-height:13.8px;color:#fff;letter-spacing:-0.426px;">Copyright © 2010 - 2024 Quadrel LLC. All rights reserved.</div>
<div style="position:absolute;left:1824.2px;top:878.3px;width:90px;height:43.5px;background:#64acf9;border-radius:22px;"></div>
<div class="t" style="left:1841.30px;top:890.90px;font-size:13px;line-height:15.6px;color:#fff;letter-spacing:0.000px;font-weight:700;">?</div>
<div class="t" style="left:1864.20px;top:890.90px;font-size:13px;line-height:15.6px;color:#fff;letter-spacing:-0.824px;font-weight:700;">Help</div>
</body></html>
